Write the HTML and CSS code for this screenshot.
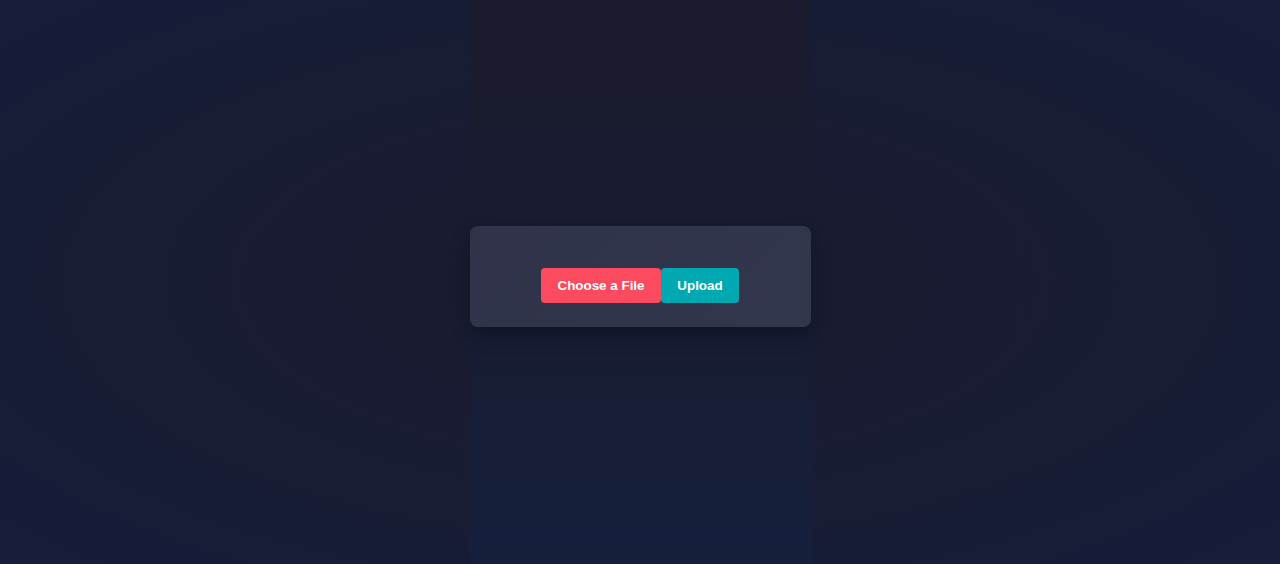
FILE: index.html
```html
<!DOCTYPE html>
<html lang="en">
<head>
<meta charset="utf-8">
<title>Upload</title>
<link rel="stylesheet" href="styles.css">
</head>
<body>
<main class="column">
  <form class="card">
    <div class="actions">
      <label class="btn btn-choose">Choose a File</label>
      <button type="button" class="btn btn-upload">Upload</button>
    </div>
  </form>
</main>
</body>
</html>
```
FILE: styles.css
```css
html, body {
  margin: 0;
  height: 100%;
}
body {
  background: radial-gradient(ellipse at center, #1a1b2f 0%, #191c33 45%, #161d3a 100%);
  font-family: "Liberation Sans", Arial, sans-serif;
  display: flex;
  justify-content: center;
}
.column {
  width: 341px;
  height: 100%;
  background: linear-gradient(to bottom, #1b1b2e 0%, #181c32 50%, #151f3b 100%);
  display: flex;
  align-items: center;
  justify-content: center;
}
.card {
  width: 341px;
  box-sizing: border-box;
  padding: 42px 0 24px;
  margin: 0 0 11px;
  background: linear-gradient(135deg, #30334a 0%, #32374e 100%);
  border-radius: 8px;
  box-shadow: 0 8px 18px rgba(8, 10, 22, 0.45);
}
.actions {
  display: flex;
  justify-content: center;
}
.btn {
  height: 35px;
  box-sizing: border-box;
  border: 0;
  border-radius: 4px;
  padding: 0;
  font-family: "Liberation Sans", Arial, sans-serif;
  font-size: 13.4px;
  font-weight: bold;
  color: #ffffff;
  white-space: nowrap;
  display: inline-flex;
  align-items: center;
  justify-content: center;
  cursor: pointer;
}
.btn-choose {
  width: 120px;
  background: #fc4a5e;
}
.btn-upload {
  width: 78px;
  background: #00a9b2;
}
```
